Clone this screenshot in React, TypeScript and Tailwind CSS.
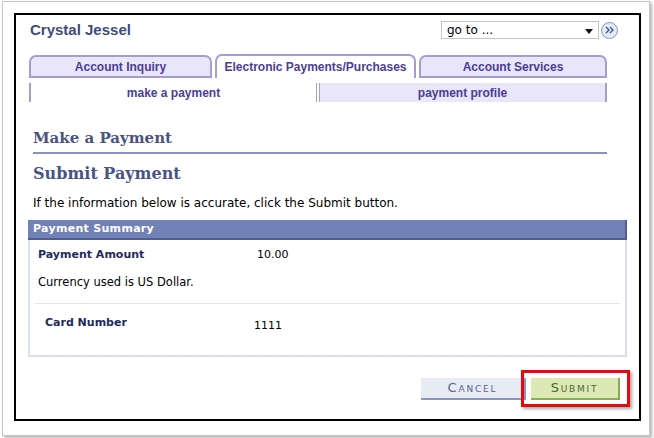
import React from 'react'

// Page "Make a Payment" — écran de confirmation

const tabs = [
  { label: 'Account Inquiry', w: 'w-[183px]', active: false },
  { label: 'Electronic Payments/Purchases', w: 'w-[201px]', active: true },
  { label: 'Account Services', w: 'w-[188px]', active: false },
]

export default function App() {
  return (
    <div className="w-[654px] h-[438px] bg-white pt-[1px] pl-[2px]" style={{ fontFamily: '"DejaVu Sans", Verdana, sans-serif' }}>
      <div className="w-[648px] h-[435px] border border-[#c4c4c4] bg-white shadow-[2px_2px_3px_rgba(0,0,0,0.3)] pt-[11px] pl-[11px]">
        <div className="w-[627px] h-[408px] border-2 border-black pl-[12px]">

          {/* En-tête : nom + go to */}
          <div className="mt-[5px] h-[20px] flex items-center">
            <span className="ml-[2px] text-[15px] font-bold text-[#3f4b7b]" style={{ fontFamily: '"Liberation Sans", Arial, sans-serif' }}>
              Crystal Jessel
            </span>
            <div className="ml-auto mr-[21px] flex items-center">
              <div className="w-[158px] h-[18px] border border-[#c6c6c6] bg-white flex items-center px-[5px] text-[12px] text-black">
                <span>go to ...</span>
                <svg width="8" height="5" viewBox="0 0 8 5" className="ml-auto mt-[2px]">
                  <path d="M0 0 L8 0 L4 5 Z" fill="#111" />
                </svg>
              </div>
              <div className="ml-[2px] w-[17px] h-[17px] rounded-full border border-[#8794c4] bg-[#e4eaf7] flex items-center justify-center">
                <svg width="9" height="8" viewBox="0 0 9 8">
                  <path d="M1 1 L4 4 L1 7 M5 1 L8 4 L5 7" fill="none" stroke="#3d56a8" strokeWidth="1.4" />
                </svg>
              </div>
            </div>
          </div>

          {/* Onglets */}
          <div className="mt-[14px] ml-[1px] h-[24px] flex items-end gap-[3px]" style={{ fontFamily: '"Liberation Sans", Arial, sans-serif' }}>
            {tabs.map(t => (
              <div
                key={t.label}
                className={`${t.w} flex items-center justify-center whitespace-nowrap rounded-t-[7px] border-2 border-[#a29dd5] text-[12px] font-bold text-[#4b3d97] ${
                  t.active ? 'h-[24px] bg-white border-b-0' : 'h-[23px] bg-[#e8e6f8]'
                }`}
              >
                {t.label}
              </div>
            ))}
          </div>

          {/* Sous-onglets */}
          <div className="mt-[5px] ml-[1px] h-[19px] w-[578px] flex text-[12px] font-bold text-[#4b3d97]" style={{ fontFamily: '"Liberation Sans", Arial, sans-serif' }}>
            <div className="w-[287px] border-l-2 border-[#a29dd5] bg-white flex items-center justify-center">make a payment</div>
            <div className="w-[4px] border-x border-[#a29dd5]" />
            <div className="flex-1 border-r-2 border-[#a29dd5] bg-[#e8e6f8] flex items-center justify-center">payment profile</div>
          </div>

          {/* Titres */}
          <div className="mt-[26px] ml-[5px] w-[574px] pb-[4px] border-b-2 border-[#8a92c2] leading-[20px] text-[15px] font-bold text-[#4a5385]" style={{ fontFamily: '"DejaVu Serif", Georgia, serif' }}>
            Make a Payment
          </div>
          <div className="mt-[9px] ml-[5px] leading-[22px] text-[16px] font-bold text-[#4a5385]" style={{ fontFamily: '"DejaVu Serif", Georgia, serif' }}>
            Submit Payment
          </div>
          <div className="mt-[11px] ml-[5px] leading-[15px] text-[12px] text-black">
            If the information below is accurate, click the Submit button.
          </div>

          {/* Résumé */}
          <div className="mt-[9px] w-[599px]">
            <div className="h-[20px] bg-[#7382b6] border-r-2 border-b-2 border-[#4e5e94] pl-[5px] flex items-center text-[11px] font-bold text-white tracking-[0.3px]">
              Payment Summary
            </div>
            <div className="h-[117px] border-2 border-t-0 border-[#d9dfee] bg-white text-[11px]">
              <div className="pt-[5px] pl-[8px] flex items-center h-[25px]">
                <span className="w-[219px] font-bold text-[#1f2a5c]">Payment Amount</span>
                <span className="text-black">10.00</span>
              </div>
              <div className="mt-[10px] pl-[8px] leading-[14px] text-[11.5px] text-black">Currency used is US Dollar.</div>
              <div className="mt-[14px] ml-[5px] mr-[5px] h-[1px] bg-[#e6e6e6]" />
              <div className="mt-[12px] pl-[15px] flex leading-[14px]">
                <span className="w-[209px] font-bold text-[#1f2a5c]">Card Number</span>
                <span className="mt-[3px] text-black">1111</span>
              </div>
            </div>
          </div>

          {/* Boutons */}
          <div className="mt-[13px] w-[602px] flex justify-end items-center">
            <button className="w-[105px] h-[22px] bg-[#e6ebf4] border-r-2 border-b-2 border-[#8c94c4] text-[13px] tracking-[1.8px] text-[#58638f] [font-variant:small-caps]">
              Cancel
            </button>
            <div className="ml-[-5px] border-[3px] border-[#e8090f] shadow-[2px_2px_3px_rgba(0,0,0,0.35)] px-[7px] pt-[5px] pb-[4px]">
              <button className="block w-[89px] h-[22px] bg-[#dde9b5] border-r-2 border-b-2 border-[#86b050] text-[13px] tracking-[1.8px] text-[#4b6a30] [font-variant:small-caps]">
                Submit
              </button>
            </div>
          </div>
        </div>
      </div>
    </div>
  )
}
